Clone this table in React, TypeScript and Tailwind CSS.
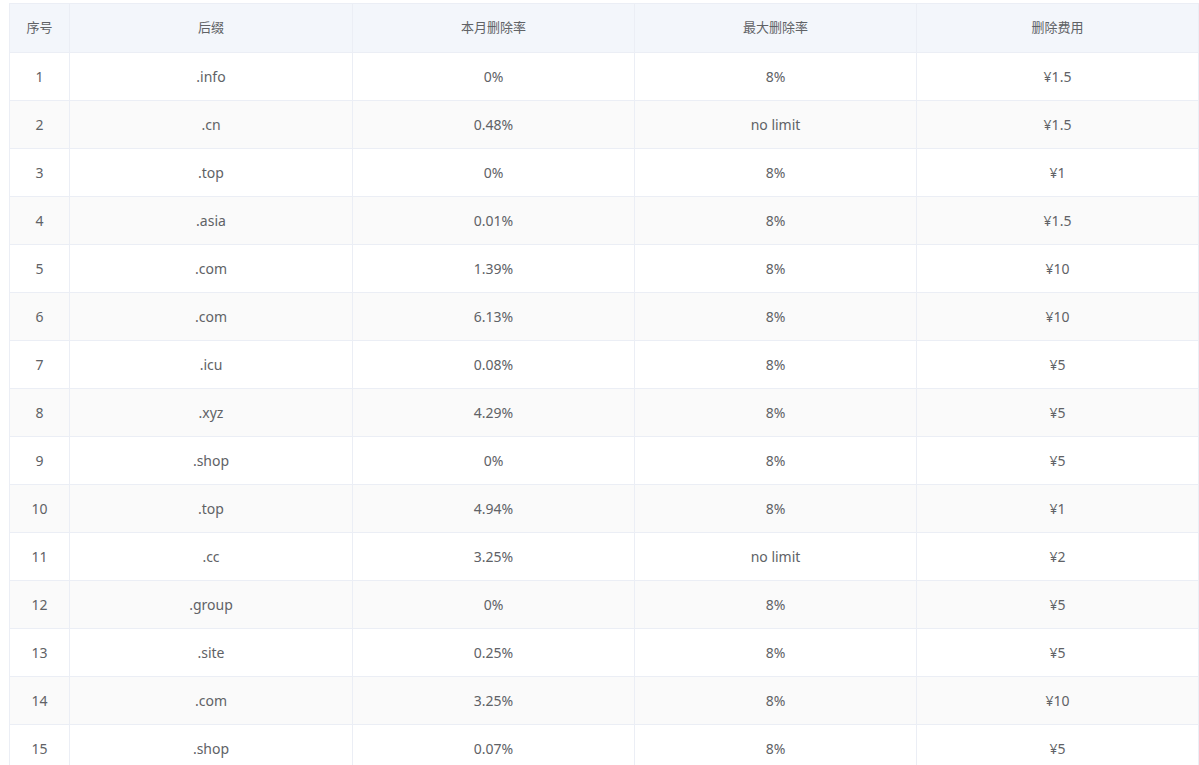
const rows: [string, string, string, string][] = [
  [".info", "0%", "8%", "¥1.5"],
  [".cn", "0.48%", "no limit", "¥1.5"],
  [".top", "0%", "8%", "¥1"],
  [".asia", "0.01%", "8%", "¥1.5"],
  [".com", "1.39%", "8%", "¥10"],
  [".com", "6.13%", "8%", "¥10"],
  [".icu", "0.08%", "8%", "¥5"],
  [".xyz", "4.29%", "8%", "¥5"],
  [".shop", "0%", "8%", "¥5"],
  [".top", "4.94%", "8%", "¥1"],
  [".cc", "3.25%", "no limit", "¥2"],
  [".group", "0%", "8%", "¥5"],
  [".site", "0.25%", "8%", "¥5"],
  [".com", "3.25%", "8%", "¥10"],
  [".shop", "0.07%", "8%", "¥5"],
];

const headers = ["序号", "后缀", "本月删除率", "最大删除率", "删除费用"];

export default function App() {
  return (
    <div className="min-h-screen bg-white pl-[9px] pt-[3px] font-['Noto_Sans','Noto_Sans_CJK_SC',sans-serif] text-[14px] text-[#606266]">
      <table className="w-[1190px] table-fixed border-separate border-spacing-0 border-l border-t border-[#ebeef5]">
        <colgroup>
          <col className="w-[60px]" />
          <col className="w-[283px]" />
          <col className="w-[282px]" />
          <col className="w-[282px]" />
          <col className="w-[282px]" />
        </colgroup>
        <thead>
          <tr>
            {headers.map((h) => (
              <th
                key={h}
                className="h-[49px] border-b border-r border-[#ebeef5] bg-[#f3f6fb] p-0 text-center text-[13px] font-normal text-[#606266]"
              >
                {h}
              </th>
            ))}
          </tr>
        </thead>
        <tbody>
          {rows.map((row, i) => (
            <tr key={i} className={i % 2 === 1 ? "bg-[#fafafa]" : "bg-white"}>
              <td className="h-[48px] border-b border-r border-[#ebeef5] p-0 text-center">{i + 1}</td>
              {row.map((cell, j) => (
                <td key={j} className="h-[48px] border-b border-r border-[#ebeef5] p-0 text-center">
                  {cell}
                </td>
              ))}
            </tr>
          ))}
        </tbody>
      </table>
    </div>
  );
}
